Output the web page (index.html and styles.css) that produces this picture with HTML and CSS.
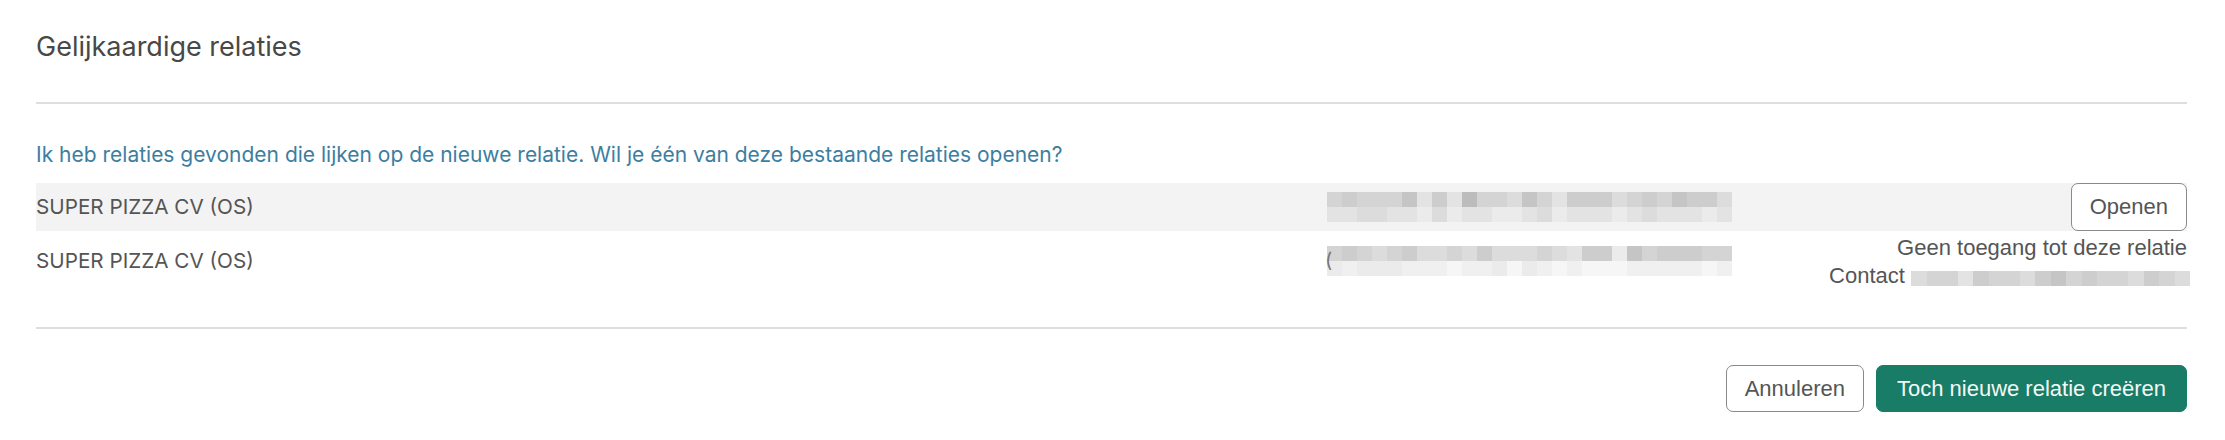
FILE: index.html
```html
<!DOCTYPE html>
<html lang="nl">
<head>
<meta charset="utf-8">
<title>Gelijkaardige relaties</title>
<link rel="stylesheet" href="styles.css">
</head>
<body>
<div class="dialog">
  <header class="dialog-header">
    <h1 class="title">Gelijkaardige relaties</h1>
  </header>
  <section class="dialog-body">
    <p class="intro">Ik heb relaties gevonden die lijken op de nieuwe relatie. Wil je één van deze bestaande relaties openen?</p>
    <div class="rel-row shaded">
      <div class="rel-name">SUPER PIZZA CV (OS)</div>
      <div class="rel-addr">
        <div class="mosaic">
          <div class="mrow"><i class="s4"></i><i class="s3"></i><i class="s4"></i><i class="s4"></i><i class="s4"></i><i class="s2"></i><i class="s6"></i><i class="s3"></i><i class="s6"></i><i class="s1"></i><i class="s4"></i><i class="s4"></i><i class="s5"></i><i class="s2"></i><i class="s4"></i><i class="s6"></i><i class="s3"></i><i class="s3"></i><i class="s3"></i><i class="s5"></i><i class="s4"></i><i class="s3"></i><i class="s4"></i><i class="s2"></i><i class="s3"></i><i class="s3"></i><i class="s5"></i></div>
          <div class="mrow"><i class="s6"></i><i class="s6"></i><i class="s5"></i><i class="s5"></i><i class="s6"></i><i class="s6"></i><i class="s7"></i><i class="s5"></i><i class="s7"></i><i class="s6"></i><i class="s6"></i><i class="s7"></i><i class="s7"></i><i class="s6"></i><i class="s5"></i><i class="s7"></i><i class="s6"></i><i class="s6"></i><i class="s6"></i><i class="s7"></i><i class="s6"></i><i class="s5"></i><i class="s6"></i><i class="s6"></i><i class="s6"></i><i class="s7"></i><i class="s6"></i></div>
        </div>
      </div>
      <div class="rel-action">
        <button class="btn btn-outline btn-open" type="button">Openen</button>
      </div>
    </div>
    <div class="rel-row">
      <div class="rel-name">SUPER PIZZA CV (OS)</div>
      <div class="rel-addr">
        <span class="paren">(</span>
        <div class="mosaic">
          <div class="mrow"><i class="s4"></i><i class="s3"></i><i class="s4"></i><i class="s5"></i><i class="s4"></i><i class="s3"></i><i class="s5"></i><i class="s5"></i><i class="s4"></i><i class="s5"></i><i class="s3"></i><i class="s5"></i><i class="s5"></i><i class="s5"></i><i class="s4"></i><i class="s5"></i><i class="s6"></i><i class="s3"></i><i class="s3"></i><i class="s7"></i><i class="s2"></i><i class="s4"></i><i class="s3"></i><i class="s3"></i><i class="s3"></i><i class="s4"></i><i class="s4"></i></div>
          <div class="mrow"><i class="s7"></i><i class="s8"></i><i class="s7"></i><i class="s7"></i><i class="s7"></i><i class="s8"></i><i class="s8"></i><i class="s8"></i><i class="s9"></i><i class="s8"></i><i class="s8"></i><i class="s7"></i><i class="s9"></i><i class="s7"></i><i class="s8"></i><i class="s9"></i><i class="s8"></i><i class="s9"></i><i class="s9"></i><i class="s9"></i><i class="s8"></i><i class="s8"></i><i class="s8"></i><i class="s8"></i><i class="s8"></i><i class="s9"></i><i class="s8"></i></div>
        </div>
      </div>
      <div class="rel-action rel-note">
        <div class="note-line">Geen toegang tot deze relatie</div>
        <div class="note-line contact">Contact <span class="mosaic small"><span class="mrow"><i class="s5"></i><i class="s4"></i><i class="s4"></i><i class="s6"></i><i class="s3"></i><i class="s4"></i><i class="s4"></i><i class="s5"></i><i class="s3"></i><i class="s2"></i><i class="s4"></i><i class="s3"></i><i class="s4"></i><i class="s4"></i><i class="s5"></i><i class="s3"></i><i class="s4"></i><i class="s5"></i></span></span></div>
      </div>
    </div>
  </section>
  <footer class="dialog-footer">
    <button class="btn btn-outline" type="button">Annuleren</button>
    <button class="btn btn-primary" type="button">Toch nieuwe relatie creëren</button>
  </footer>
</div>
</body>
</html>
```
FILE: styles.css
```css
* { box-sizing: border-box; }
html, body { margin: 0; padding: 0; background: #ffffff; }
body { font-family: Inter, "Noto Sans", sans-serif; color: #555555; }

.dialog { padding: 0 38px 0 36px; }

.dialog-header {
  padding-top: 32px;
  height: 104px;
  border-bottom: 2px solid #dedede;
}
.title {
  margin: 0;
  font-size: 27px;
  line-height: 30px;
  font-weight: 400;
  color: #484848;
}

.dialog-body { padding-top: 37px; padding-bottom: 36px; border-bottom: 2px solid #dedede; }
.intro {
  margin: 0 0 14px 0;
  font-size: 21px;
  line-height: 28px;
  color: #3d7ea0;
}

.rel-row {
  display: grid;
  grid-template-columns: 1291px 1fr auto;
  align-items: center;
  font-size: 20.7px;
  color: #555555;
}
.rel-row.shaded { background: #f3f3f3; }
.rel-name { line-height: 28px; }
.rel-addr { display: flex; align-items: center; position: relative; }
.paren { position: absolute; left: -2px; top: 50%; transform: translateY(-55%); color: #777; font-size: 20px; line-height: 20px; }

.mosaic { display: flex; flex-direction: column; }
.mrow { display: flex; }
.mrow i { display: block; width: 15px; height: 15px; }
.mosaic.small { display: inline-flex; vertical-align: -3px; }
.mosaic.small .mrow i { width: 15.5px; height: 15px; }

.s1 { background: #bcbcbc; }
.s2 { background: #c5c5c5; }
.s3 { background: #cdcdcd; }
.s4 { background: #d4d4d4; }
.s5 { background: #dcdcdc; }
.s6 { background: #e3e3e3; }
.s7 { background: #ebebeb; }
.s8 { background: #f0f0f0; }
.s9 { background: #f6f6f6; }

.rel-action { display: flex; justify-content: flex-end; }
.rel-note {
  flex-direction: column;
  align-items: flex-end;
  padding: 3px 0 1px 0;
  font-family: "Liberation Sans", Arial, sans-serif;
  font-size: 22px;
  line-height: 28px;
  color: #555555;
}
.note-line { white-space: nowrap; }
.contact { margin-right: -3px; }

.btn {
  font-family: "Liberation Sans", Arial, sans-serif;
  font-size: 22px;
  height: 47px;
  border-radius: 7px;
  cursor: pointer;
  white-space: nowrap;
}
.btn-outline {
  background: #ffffff;
  border: 1.5px solid #8a8a8a;
  color: #555555;
  padding: 0 18px;
}
.btn-open { height: 48px; padding: 0 18px; }
.btn-primary {
  background: #187c66;
  border: 1.5px solid #187c66;
  color: #f4f8f6;
  padding: 0 20px;
}

.dialog-footer {
  display: flex;
  justify-content: flex-end;
  gap: 12px;
  padding-top: 36px;
}
```
